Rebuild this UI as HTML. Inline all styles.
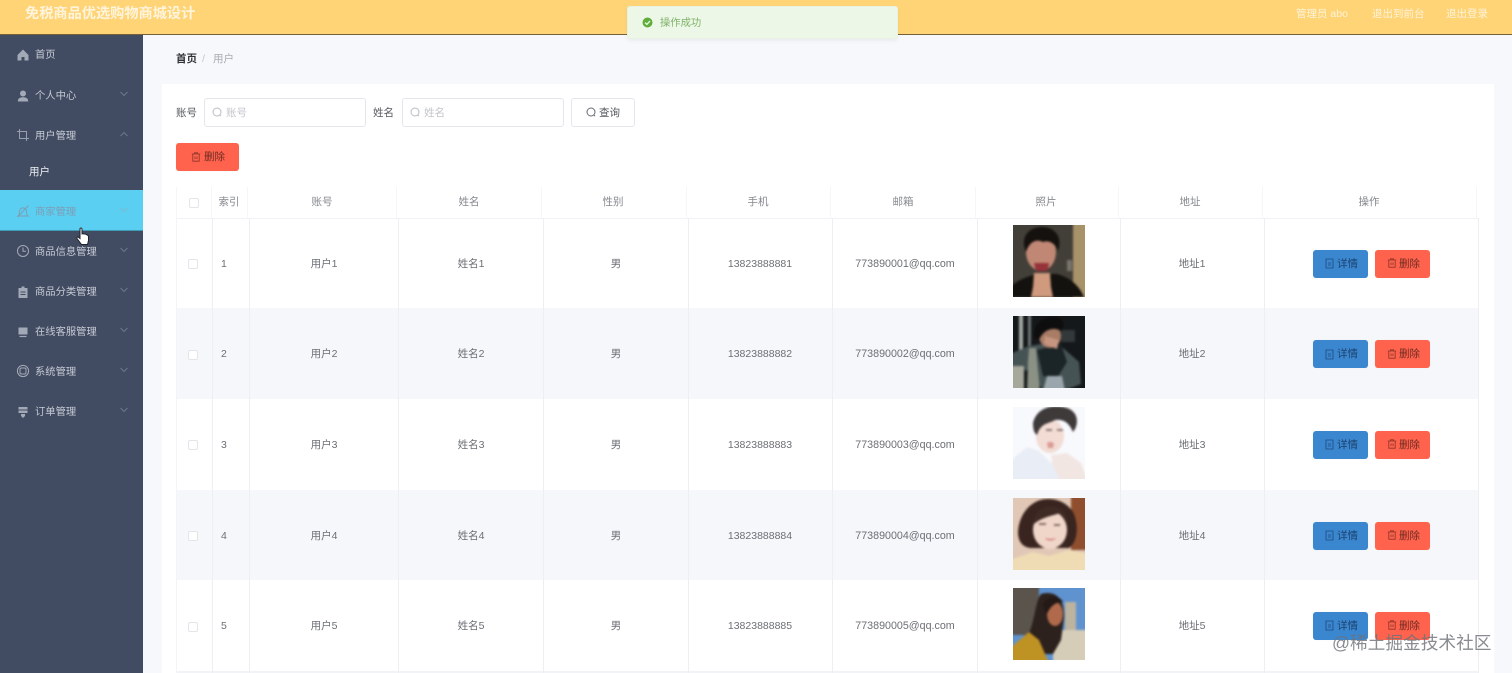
<!DOCTYPE html>
<html lang="zh">
<head>
<meta charset="utf-8">
<title>用户</title>
<style>
*{box-sizing:border-box;margin:0;padding:0}
html,body{width:1512px;height:673px;overflow:hidden;background:#f6f8fb}
body{font-family:"Liberation Sans","Noto Sans CJK SC",sans-serif;font-size:10.5px;color:#6c6f75;position:relative}
.a{position:absolute;white-space:nowrap}
#page{position:absolute;left:0;top:0;width:1512px;height:673px;filter:blur(.35px)}
#hd{left:0;top:0;width:1512px;height:35px;background:#ffd477;border-bottom:1px solid #75603a}
#sb{left:0;top:35px;width:143px;height:638px;background:#414b61}
.mi{color:#c6ccd6;font-size:10.3px;line-height:14px;left:35px}
.ic{position:absolute;left:16px;width:14px;height:14px}
.ch{position:absolute;left:119px;width:10px;height:6px}
.c{text-align:center;transform:translateX(-50%);line-height:14px}
.hl{background:#edeff3;width:1px;position:absolute}
.btn{position:absolute;height:28px;border-radius:3px;box-shadow:0 0 1px rgba(0,0,0,.08)}
.del{background:#ff634d}
.det{background:#3a87d0}
.dt{color:#1d426e;line-height:14px}
.dl{color:#6e2a22;line-height:14px}
.cb{position:absolute;left:188px;width:10px;height:10px;border:1px solid #e3e5ea;border-radius:2px;background:#fff}
.inp{position:absolute;top:98px;height:29px;background:#fff;border:1px solid #e4e6eb;border-radius:3px;color:#c2c5cb;font-size:10.5px;line-height:29px;padding-left:21px}
svg{display:block;position:absolute}
.ph{left:1013px;width:72px;height:72px;overflow:hidden}
.ph>g{filter:blur(1px)}
.em{font-size:10.7px}
</style>
</head>
<body>
<div id="page">

<div class="a" style="left:162px;top:84px;width:1332px;height:589px;background:#fff"></div>

<!-- Rows -->
<div class="a" style="left:176px;top:308px;width:1302px;height:91px;background:#f5f7fa"></div>
<div class="a" style="left:176px;top:490px;width:1302px;height:90px;background:#f5f7fa"></div>
<div class="a" style="left:176px;top:218px;width:1302px;height:1px;background:#f0f2f5"></div>
<div class="a" style="left:176px;top:671px;width:1302px;height:2px;background:#f1f3f6"></div>

<!-- Column lines -->
<div class="hl" style="left:176px;top:218px;height:455px;background:#f3f4f7"></div>
<div class="hl" style="left:212px;top:218px;height:455px"></div>
<div class="hl" style="left:249px;top:218px;height:455px"></div>
<div class="hl" style="left:398px;top:218px;height:455px"></div>
<div class="hl" style="left:543px;top:218px;height:455px"></div>
<div class="hl" style="left:688px;top:218px;height:455px"></div>
<div class="hl" style="left:832px;top:218px;height:455px"></div>
<div class="hl" style="left:977px;top:218px;height:455px"></div>
<div class="hl" style="left:1120px;top:218px;height:455px"></div>
<div class="hl" style="left:1264px;top:218px;height:455px"></div>
<div class="hl" style="left:1478px;top:218px;height:455px"></div>

<div class="hl" style="left:176px;top:187px;height:31px;background:#f5f6f8"></div>
<div class="hl" style="left:211px;top:187px;height:31px;background:#f5f6f8"></div>
<div class="hl" style="left:247px;top:187px;height:31px;background:#f5f6f8"></div>
<div class="hl" style="left:396px;top:187px;height:31px;background:#f5f6f8"></div>
<div class="hl" style="left:541px;top:187px;height:31px;background:#f5f6f8"></div>
<div class="hl" style="left:686px;top:187px;height:31px;background:#f5f6f8"></div>
<div class="hl" style="left:830px;top:187px;height:31px;background:#f5f6f8"></div>
<div class="hl" style="left:975px;top:187px;height:31px;background:#f5f6f8"></div>
<div class="hl" style="left:1118px;top:187px;height:31px;background:#f5f6f8"></div>
<div class="hl" style="left:1262px;top:187px;height:31px;background:#f5f6f8"></div>
<div class="hl" style="left:1476px;top:187px;height:31px;background:#f5f6f8"></div>

<!-- Header -->
<div class="a" id="hd"></div>
<div class="a" style="left:25px;top:5px;color:#fff4dc;font-size:14.2px;font-weight:700;line-height:18px">免税商品优选购物商城设计</div>
<div class="a" style="left:1296px;top:7px;color:#fff3d8;font-size:10.5px;line-height:14px">管理员 abo</div>
<div class="a" style="left:1372px;top:7px;color:#fff3d8;font-size:10.5px;line-height:14px">退出到前台</div>
<div class="a" style="left:1446px;top:7px;color:#fff3d8;font-size:10.5px;line-height:14px">退出登录</div>

<!-- Toast -->
<div class="a" style="left:627px;top:6px;width:271px;height:33px;background:#edf7e8;border:1px solid #e8f2e3;border-radius:3px;box-shadow:0 2px 5px rgba(0,0,0,.05)"></div>
<svg style="left:642px;top:17px" width="11" height="11" viewBox="0 0 11 11"><circle cx="5.5" cy="5.5" r="5" fill="#5fae3c"/><path d="M3 5.6l1.800 1.800L8 4" fill="none" stroke="#edf7e8" stroke-width="1.3"/></svg>
<div class="a" style="left:660px;top:17px;color:#7fb368;font-size:10.3px;line-height:14px">操作成功</div>

<!-- Sidebar -->
<div class="a" id="sb"></div>
<div class="a" style="left:0;top:190px;width:143px;height:41px;background:#5bcff1;border-bottom:1px solid #3f9ab6"></div>

<div class="a mi" style="top:49px">首页</div>
<div class="a mi" style="top:90px">个人中心</div>
<div class="a mi" style="top:130px">用户管理</div>
<div class="a" style="left:29px;top:165px;color:#eef1f5;font-size:10.5px;line-height:14px">用户</div>
<div class="a mi" style="top:206px;color:#7d9db6">商家管理</div>
<div class="a mi" style="top:246px">商品信息管理</div>
<div class="a mi" style="top:286px">商品分类管理</div>
<div class="a mi" style="top:326px">在线客服管理</div>
<div class="a mi" style="top:366px">系统管理</div>
<div class="a mi" style="top:406px">订单管理</div>

<svg class="ic" style="top:48px" viewBox="0 0 14 14"><path d="M7 1.500L1.500 7v5.500h4V9h3v3.500h4V7z" fill="#a3aab7"/></svg>
<svg class="ic" style="top:89px" viewBox="0 0 14 14"><circle cx="7" cy="4.500" r="3" fill="#a3aab7"/><path d="M1.800 12.500c0-3 2-4.200 5.200-4.200s5.200 1.200 5.200 4.200z" fill="#a3aab7"/></svg>
<svg class="ic" style="top:128px" viewBox="0 0 14 14"><path d="M3.500 1v9.500H13M1 3.500h9.500V13" fill="none" stroke="#98a0ae" stroke-width="1"/></svg>
<svg class="ic" style="top:204px" viewBox="0 0 14 14"><path d="M2 12c1.400-1 1.400-2 1.400-4.500a3.600 3.600 0 017.200 0c0 2.500 0 3.500 1.400 4.500zM1.500 13L12.500 1.500" fill="none" stroke="#7d9db6" stroke-width="1"/></svg>
<svg class="ic" style="top:244px" viewBox="0 0 14 14"><circle cx="7" cy="7" r="5.500" fill="none" stroke="#a3aab7" stroke-width="1"/><path d="M7 3.500V7.300h3" fill="none" stroke="#a3aab7" stroke-width="1"/></svg>
<svg class="ic" style="top:285px" viewBox="0 0 14 14"><path d="M2.500 3h3V1.500h3V3h3v10h-9z" fill="#a3aab7"/><path d="M4.500 7h5M4.500 9.500h5" stroke="#414b61" stroke-width="1"/></svg>
<svg class="ic" style="top:325px" viewBox="0 0 14 14"><rect x="2.500" y="2.500" width="9" height="7" fill="#a3aab7"/><path d="M3.500 11.500h7" stroke="#a3aab7" stroke-width="1.200"/></svg>
<svg class="ic" style="top:364px" viewBox="0 0 14 14"><circle cx="7" cy="7" r="5.600" fill="none" stroke="#a3aab7" stroke-width="1"/><rect x="4" y="4" width="6" height="6" rx="1.400" fill="none" stroke="#a3aab7" stroke-width="1"/></svg>
<svg class="ic" style="top:405px" viewBox="0 0 14 14"><path d="M2.500 2h9v6h-9z" fill="#a3aab7"/><path d="M5 9h4v2l-2 2-2-2z" fill="#a3aab7"/><path d="M2.500 5h9" stroke="#414b61"/></svg>

<svg class="ch" style="top:91px" viewBox="0 0 10 6"><path d="M1.500 1L5 4.500 8.500 1" fill="none" stroke="#6f7787"/></svg>
<svg class="ch" style="top:131px" viewBox="0 0 10 6"><path d="M1.500 5L5 1.500 8.500 5" fill="none" stroke="#6f7787"/></svg>
<svg class="ch" style="top:207px" viewBox="0 0 10 6"><path d="M1.500 1L5 4.500 8.500 1" fill="none" stroke="#7fb8cf"/></svg>
<svg class="ch" style="top:247px" viewBox="0 0 10 6"><path d="M1.500 1L5 4.500 8.500 1" fill="none" stroke="#6f7787"/></svg>
<svg class="ch" style="top:287px" viewBox="0 0 10 6"><path d="M1.500 1L5 4.500 8.500 1" fill="none" stroke="#6f7787"/></svg>
<svg class="ch" style="top:327px" viewBox="0 0 10 6"><path d="M1.500 1L5 4.500 8.500 1" fill="none" stroke="#6f7787"/></svg>
<svg class="ch" style="top:367px" viewBox="0 0 10 6"><path d="M1.500 1L5 4.500 8.500 1" fill="none" stroke="#6f7787"/></svg>
<svg class="ch" style="top:407px" viewBox="0 0 10 6"><path d="M1.500 1L5 4.500 8.500 1" fill="none" stroke="#6f7787"/></svg>

<!-- Cursor -->
<svg style="left:76px;top:227px" width="14" height="19" viewBox="0 0 14 19"><path d="M4 1.500c1-1 2-.5 2 .8V7l1-.3 1 .3 1.200 0 1.300.6 1 .6 1 1v4.300L11.500 17.500H5.500L1 11.500c-.5-1 .5-2 1.500-1.300L4 11.500z" fill="#fff" stroke="#20242c" stroke-width="1"/></svg>

<!-- Breadcrumb -->
<div class="a" style="left:176px;top:52px;color:#303133;font-weight:700;font-size:10.5px;line-height:14px">首页</div>
<div class="a" style="left:202px;top:52px;color:#c0c4cc;font-size:10.5px;line-height:14px">/</div>
<div class="a" style="left:213px;top:52px;color:#a8abb2;font-size:10.5px;line-height:14px">用户</div>

<!-- Search -->
<div class="a" style="left:176px;top:106px;color:#55585e;line-height:14px">账号</div>
<div class="inp" style="left:204px;width:162px">账号</div>
<svg style="left:212px;top:107px" width="10" height="10" viewBox="0 0 10 10"><circle cx="5" cy="5" r="4" fill="none" stroke="#b8bcc4"/><path d="M7.800 8l1.200 1.200" stroke="#b8bcc4"/></svg>
<div class="a" style="left:373px;top:106px;color:#55585e;line-height:14px">姓名</div>
<div class="inp" style="left:402px;width:162px">姓名</div>
<svg style="left:410px;top:107px" width="10" height="10" viewBox="0 0 10 10"><circle cx="5" cy="5" r="4" fill="none" stroke="#b8bcc4"/><path d="M7.800 8l1.200 1.200" stroke="#b8bcc4"/></svg>
<div class="a" style="left:571px;top:98px;width:64px;height:29px;background:#fff;border:1px solid #e4e6eb;border-radius:3px"></div>
<svg style="left:586px;top:107px" width="10" height="10" viewBox="0 0 10 10"><circle cx="5" cy="5" r="4" fill="none" stroke="#666b73"/><path d="M7.800 8l1.200 1.200" stroke="#666b73"/></svg>
<div class="a" style="left:599px;top:106px;color:#55585e;line-height:14px">查询</div>

<div class="btn del" style="left:176px;top:143px;width:63px"></div>
<svg style="left:191px;top:152px" width="10" height="10" viewBox="0 0 10 10"><path d="M.8 2h8.400M3.500 2V.8h3V2M1.800 2v7.200h6.400V2M4 4.500v2.500M6 4.500v2.500" fill="none" stroke="#8c3226" stroke-width=".8"/></svg>
<div class="a dl" style="left:204px;top:150px">删除</div>

<!-- Table head -->
<div class="cb" style="left:189px;top:198px"></div>
<div class="a c" style="left:229px;top:195px;color:#85888e">索引</div>
<div class="a c" style="left:322px;top:195px;color:#85888e">账号</div>
<div class="a c" style="left:469px;top:195px;color:#85888e">姓名</div>
<div class="a c" style="left:613px;top:195px;color:#85888e">性别</div>
<div class="a c" style="left:758px;top:195px;color:#85888e">手机</div>
<div class="a c" style="left:903px;top:195px;color:#85888e">邮箱</div>
<div class="a c" style="left:1046px;top:195px;color:#85888e">照片</div>
<div class="a c" style="left:1190px;top:195px;color:#85888e">地址</div>
<div class="a c" style="left:1369px;top:195px;color:#85888e">操作</div>

<!-- Row 1 -->
<div class="cb" style="top:259px"></div>
<div class="a" style="left:221px;top:257px;line-height:14px">1</div>
<div class="a c" style="left:324px;top:257px">用户1</div>
<div class="a c" style="left:471px;top:257px">姓名1</div>
<div class="a c" style="left:616px;top:257px">男</div>
<div class="a c" style="left:760px;top:257px">13823888881</div>
<div class="a c em" style="left:905px;top:257px">773890001@qq.com</div>
<div class="a c" style="left:1192px;top:257px">地址1</div>
<div class="btn det" style="left:1313px;top:250px;width:55px"></div>
<div class="btn del" style="left:1375px;top:250px;width:55px"></div>
<svg style="left:1325px;top:258px" width="9" height="11" viewBox="0 0 9 11"><path d="M1 1h7v9H1zM3 5h3M3 7h3" fill="none" stroke="#1f4a7c" stroke-width=".8"/></svg>
<div class="a dt" style="left:1337px;top:257px">详情</div>
<svg style="left:1387px;top:258px" width="10" height="10" viewBox="0 0 10 10"><path d="M.8 2h8.400M3.500 2V.8h3V2M1.800 2v7.200h6.400V2M4 4.500v2.500M6 4.500v2.500" fill="none" stroke="#8c3226" stroke-width=".8"/></svg>
<div class="a dl" style="left:1399px;top:257px">删除</div>

<!-- Row 2 -->
<div class="cb" style="top:350px"></div>
<div class="a" style="left:221px;top:347px;line-height:14px">2</div>
<div class="a c" style="left:324px;top:347px">用户2</div>
<div class="a c" style="left:471px;top:347px">姓名2</div>
<div class="a c" style="left:616px;top:347px">男</div>
<div class="a c" style="left:760px;top:347px">13823888882</div>
<div class="a c em" style="left:905px;top:347px">773890002@qq.com</div>
<div class="a c" style="left:1192px;top:347px">地址2</div>
<div class="btn det" style="left:1313px;top:340px;width:55px"></div>
<div class="btn del" style="left:1375px;top:340px;width:55px"></div>
<svg style="left:1325px;top:349px" width="9" height="11" viewBox="0 0 9 11"><path d="M1 1h7v9H1zM3 5h3M3 7h3" fill="none" stroke="#1f4a7c" stroke-width=".8"/></svg>
<div class="a dt" style="left:1337px;top:347px">详情</div>
<svg style="left:1387px;top:349px" width="10" height="10" viewBox="0 0 10 10"><path d="M.8 2h8.400M3.500 2V.8h3V2M1.800 2v7.200h6.400V2M4 4.500v2.500M6 4.500v2.500" fill="none" stroke="#8c3226" stroke-width=".8"/></svg>
<div class="a dl" style="left:1399px;top:347px">删除</div>

<!-- Row 3 -->
<div class="cb" style="top:440px"></div>
<div class="a" style="left:221px;top:438px;line-height:14px">3</div>
<div class="a c" style="left:324px;top:438px">用户3</div>
<div class="a c" style="left:471px;top:438px">姓名3</div>
<div class="a c" style="left:616px;top:438px">男</div>
<div class="a c" style="left:760px;top:438px">13823888883</div>
<div class="a c em" style="left:905px;top:438px">773890003@qq.com</div>
<div class="a c" style="left:1192px;top:438px">地址3</div>
<div class="btn det" style="left:1313px;top:431px;width:55px"></div>
<div class="btn del" style="left:1375px;top:431px;width:55px"></div>
<svg style="left:1325px;top:439px" width="9" height="11" viewBox="0 0 9 11"><path d="M1 1h7v9H1zM3 5h3M3 7h3" fill="none" stroke="#1f4a7c" stroke-width=".8"/></svg>
<div class="a dt" style="left:1337px;top:438px">详情</div>
<svg style="left:1387px;top:439px" width="10" height="10" viewBox="0 0 10 10"><path d="M.8 2h8.400M3.500 2V.8h3V2M1.800 2v7.200h6.400V2M4 4.500v2.500M6 4.500v2.500" fill="none" stroke="#8c3226" stroke-width=".8"/></svg>
<div class="a dl" style="left:1399px;top:438px">删除</div>

<!-- Row 4 -->
<div class="cb" style="top:531px"></div>
<div class="a" style="left:221px;top:529px;line-height:14px">4</div>
<div class="a c" style="left:324px;top:529px">用户4</div>
<div class="a c" style="left:471px;top:529px">姓名4</div>
<div class="a c" style="left:616px;top:529px">男</div>
<div class="a c" style="left:760px;top:529px">13823888884</div>
<div class="a c em" style="left:905px;top:529px">773890004@qq.com</div>
<div class="a c" style="left:1192px;top:529px">地址4</div>
<div class="btn det" style="left:1313px;top:522px;width:55px"></div>
<div class="btn del" style="left:1375px;top:522px;width:55px"></div>
<svg style="left:1325px;top:530px" width="9" height="11" viewBox="0 0 9 11"><path d="M1 1h7v9H1zM3 5h3M3 7h3" fill="none" stroke="#1f4a7c" stroke-width=".8"/></svg>
<div class="a dt" style="left:1337px;top:529px">详情</div>
<svg style="left:1387px;top:530px" width="10" height="10" viewBox="0 0 10 10"><path d="M.8 2h8.400M3.500 2V.8h3V2M1.800 2v7.200h6.400V2M4 4.500v2.500M6 4.500v2.500" fill="none" stroke="#8c3226" stroke-width=".8"/></svg>
<div class="a dl" style="left:1399px;top:529px">删除</div>

<!-- Row 5 -->
<div class="cb" style="top:622px"></div>
<div class="a" style="left:221px;top:619px;line-height:14px">5</div>
<div class="a c" style="left:324px;top:619px">用户5</div>
<div class="a c" style="left:471px;top:619px">姓名5</div>
<div class="a c" style="left:616px;top:619px">男</div>
<div class="a c" style="left:760px;top:619px">13823888885</div>
<div class="a c em" style="left:905px;top:619px">773890005@qq.com</div>
<div class="a c" style="left:1192px;top:619px">地址5</div>
<div class="btn det" style="left:1313px;top:612px;width:55px"></div>
<div class="btn del" style="left:1375px;top:612px;width:55px"></div>
<svg style="left:1325px;top:620px" width="9" height="11" viewBox="0 0 9 11"><path d="M1 1h7v9H1zM3 5h3M3 7h3" fill="none" stroke="#1f4a7c" stroke-width=".8"/></svg>
<div class="a dt" style="left:1337px;top:619px">详情</div>
<svg style="left:1387px;top:620px" width="10" height="10" viewBox="0 0 10 10"><path d="M.8 2h8.400M3.500 2V.8h3V2M1.800 2v7.200h6.400V2M4 4.500v2.500M6 4.500v2.500" fill="none" stroke="#8c3226" stroke-width=".8"/></svg>
<div class="a dl" style="left:1399px;top:619px">删除</div>

<!-- Photos -->
<svg class="ph" style="top:225px" viewBox="0 0 72 72"><g>
<rect x="-3" y="-3" width="78" height="78" fill="#423f38"/>
<rect x="60" y="-3" width="15" height="78" fill="#a8926a"/>
<rect x="54" y="35" width="5" height="11" fill="#77756c"/>
<path d="M-3 72V62C6 54 18 50 26 49L44 49C56 52 66 60 71 72z" fill="#14120f"/>
<ellipse cx="28" cy="27" rx="15" ry="19" fill="#c08874"/>
<path d="M13 27C6 10 18 2 29 2 42 2 50 12 45 26 42 18 36 15 30 17 22 13 16 18 13 27z" fill="#15110e"/>
<path d="M21 38h15l-1.500 8H23z" fill="#96323a"/>
<path d="M21 48h16l1 14 2 10H18l2-10z" fill="#cf9a7d"/>
</g></svg>

<svg class="ph" style="top:316px" viewBox="0 0 72 72"><g>
<rect x="-3" y="-3" width="78" height="78" fill="#15181a"/>
<rect x="6" y="-3" width="4" height="42" fill="#a3aaa6"/>
<rect x="15" y="-3" width="3" height="36" fill="#6d7473"/>
<rect x="48" y="14" width="14" height="12" fill="#33383a"/>
<path d="M-3 38L16 30 28 28 50 32 66 46 68 68 50 75 30 75 18 54-3 56z" fill="#465355"/>
<path d="M24 34L48 28 54 46 44 62 30 60z" fill="#1b2426"/>
<ellipse cx="37" cy="20" rx="11" ry="12" fill="#a97c66"/>
<path d="M21 22C19 6 32-1 44 1 52 3 52 12 48 15 40 10 30 14 26 24z" fill="#0f0e0e"/>
<path d="M32 20l14 4-2 9-13-5z" fill="#c69580"/>
<path d="M16 32h7l1 12 3 31H14l1-30z" fill="#8b9184"/>
<path d="M-3 50h14v25H-3z" fill="#a5a89b"/>
<path d="M34 60h15l3 15H30z" fill="#9aa6ac"/>
</g></svg>

<svg class="ph" style="top:407px" viewBox="0 0 72 72"><g>
<rect x="-3" y="-3" width="78" height="78" fill="#f8f9fd"/>
<path d="M-3 54L14 40 26 44 38 56 50 46 64 58 75 75H-3z" fill="#e9edf5"/>
<ellipse cx="37" cy="29" rx="14" ry="17" fill="#f2dcd4"/>
<path d="M20 16C24 0 40-3 54 1 66 5 66 18 60 25 56 15 50 12 42 13 36 17 28 15 24 28 21 26 20 22 20 16z" fill="#3f3a3a"/>
<path d="M33 23h6M44 23h6" stroke="#6d5a5a" stroke-width="1.500"/>
<path d="M34 36c3-2 6-1 7 1l-1 4h-5z" fill="#dc9b96"/>
<path d="M38 48L54 46 68 56 75 75H48L40 58z" fill="#f2e6e3"/>
</g></svg>

<svg class="ph" style="top:498px" viewBox="0 0 72 72"><g>
<rect x="-3" y="-3" width="78" height="78" fill="#e1c8b6"/>
<rect x="58" y="-3" width="17" height="55" fill="#8f4f2e"/>
<path d="M35 1C18 1 6 16 5 34 5 45 11 50 19 50L56 50C65 44 66 26 60 14 54 5 45 1 35 1z" fill="#39241f"/>
<ellipse cx="37" cy="32" rx="17" ry="19" fill="#f0d6c9"/>
<path d="M19 28C20 15 30 7 40 8 50 9 56 18 55 30 52 22 50 18 47 15 40 18 27 19 19 28z" fill="#3f2a24"/>
<path d="M26 26h7M41 27h6" stroke="#4b3530" stroke-width="1.200"/>
<path d="M32 40c4 1.500 8 1.500 11 0-2 3-9 3-11 0z" fill="#c75f5f"/>
<path d="M-3 62L20 54 36 58 56 52 75 56V75H-3z" fill="#efdcb5"/>
</g></svg>

<svg class="ph" style="top:588px" viewBox="0 0 72 72"><g>
<rect x="-3" y="-3" width="78" height="78" fill="#5f93d0"/>
<rect x="-3" y="-3" width="29" height="50" fill="#5a544d"/>
<path d="M52 14h11v28H52z" fill="#bdb4a0"/>
<path d="M40 42h35v33H40z" fill="#d6cdb9"/>
<path d="M28 6C42 2 52 10 51 30L48 52 40 66H22L14 50C22 34 22 14 28 6z" fill="#2c211c"/>
<ellipse cx="42" cy="26" rx="8" ry="12" fill="#b06a4b"/>
<path d="M30 16C34 8 46 6 50 14 44 14 38 16 33 28z" fill="#231916"/>
<path d="M-3 60L16 44 26 52 36 75H-3z" fill="#bf9224"/>
</g></svg>

<!-- Watermark -->
<div class="a" style="left:1332px;top:631px;color:rgba(110,113,120,.82);font-size:17.7px;line-height:24px">@稀土掘金技术社区</div>

</div>
</body>
</html>
